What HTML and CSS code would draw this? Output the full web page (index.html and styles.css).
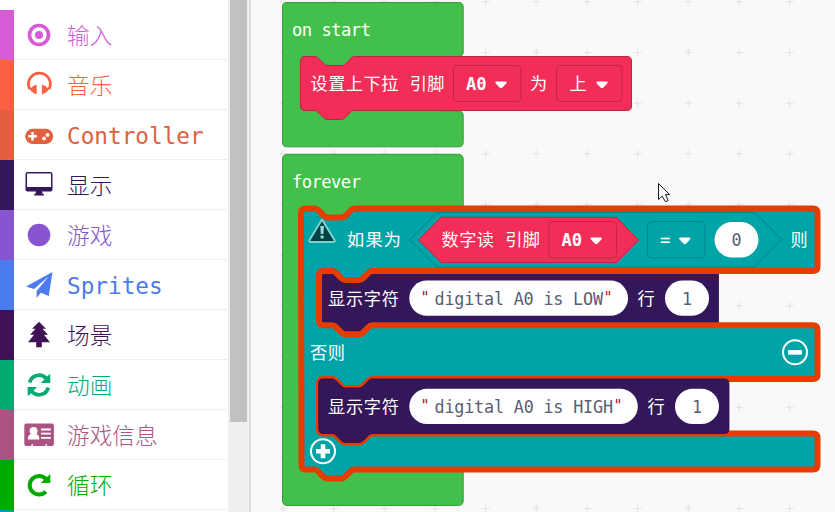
FILE: index.html
```html
<!DOCTYPE html>
<html lang="zh-CN">
<head>
<meta charset="utf-8">
<title>Blocks</title>
<link rel="stylesheet" href="styles.css">
</head>
<body>
<div class="editor">
  <nav class="toolbox">
    <ul class="categories">
      <li class="category input"><svg class="icon" viewBox="0 0 32 32"><circle cx="16" cy="16" r="9.500" fill="none" stroke="currentColor" stroke-width="3.700"/><circle cx="16" cy="16" r="4"/></svg><span>输入</span></li>
      <li class="category music"><svg class="icon" viewBox="0 0 32 32"><path d="M6.500 19.500A10.900 10.900 0 1 1 26.300 19.500" fill="none" stroke="currentColor" stroke-width="2.800"/><path d="M13.700 15.800V25.300L12 24.800 8.500 22.500 7.300 20.800 5 20.300 6 18.500 8 19C9.500 17.500 11 16.200 13.700 15.800zM18.900 15.800V25.300L20.700 24.800 24.200 22.500 25.400 20.800 27.700 20.300 26.700 18.500 24.700 19C23.200 17.500 21.700 16.200 18.900 15.800z"/></svg><span>音乐</span></li>
      <li class="category controller"><svg class="icon" viewBox="0 0 32 32"><rect x="2.200" y="9.700" width="28" height="15.200" rx="7.600"/><path d="M9.500 12.900v8.600M5.200 17.200h8.600" stroke="#fff" stroke-width="2.500"/><circle cx="21" cy="19.400" r="1.900" fill="#fff"/><circle cx="24.500" cy="15.900" r="1.900" fill="#fff"/></svg><span>Controller</span></li>
      <li class="category display"><svg class="icon" viewBox="0 0 32 32"><path fill-rule="evenodd" d="M4.500 3h23q2 0 2 2v15.600q0 2-2 2H19l.7 2.500h1.200v1.500h-9.800v-1.500h1.200l.7-2.500H4.500q-2 0-2-2V5q0-2 2-2zM4 4.500V18h24V4.500z"/></svg><span>显示</span></li>
      <li class="category game"><svg class="icon" viewBox="0 0 32 32"><circle cx="16" cy="16" r="11.300"/></svg><span>游戏</span></li>
      <li class="category sprites"><svg class="icon" viewBox="0 0 32 32"><path d="M29.500 3 25.800 27 17.800 23.800 13.600 29V22L25.500 7.500 11 20 3 17.600z"/></svg><span>Sprites</span></li>
      <li class="category scene"><svg class="icon" viewBox="0 0 32 32"><path d="m16 2.800 7 7h-3.500l5.500 6h-4l6 7.500h-8.200v5h-5.600v-5H5l6-7.500H7l5.500-6H9z"/></svg><span>场景</span></li>
      <li class="category animation"><svg class="icon" viewBox="0 0 32 32"><path d="M6.700 13.500A9.500 9.500 0 0 1 23.500 10M25.300 18.500A9.500 9.500 0 0 1 8.500 22" fill="none" stroke="currentColor" stroke-width="3.700"/><path d="M27.300 5v9h-9.500l3.600-3.600L24.500 7zM4.700 27v-9h9.500l-3.600 3.600L7.500 25z"/></svg><span>动画</span></li>
      <li class="category info"><svg class="icon" viewBox="0 0 32 32"><rect x="1.300" y="4.600" width="29.600" height="22.400" rx="2"/><circle cx="10.600" cy="11.900" r="3.900" fill="#fff"/><path fill="#fff" d="M5 20.500v-1.300q.3-3.700 3.400-4.200h4.600q3 .5 3.300 4.200v1.300zM18 9.600h9.800v1.800H18zm0 4.200h9.800v1.700H18zm0 4.200h9.800v1.800H18zM8.400 25.200h1.600V27H8.400zm14 0H24V27h-1.600z"/></svg><span>游戏信息</span></li>
      <li class="category loops"><svg class="icon" viewBox="0 0 32 32"><path d="M23.300 10.500A9.300 9.300 0 1 0 22.800 22.600" fill="none" stroke="currentColor" stroke-width="4"/><path d="M27.300 5V14H17.800l4-4z"/></svg><span>循环</span></li>
      <li class="category logic"></li>
    </ul>
    <div class="scrollbar"><div class="thumb"></div></div>
  </nav>
  <main class="workspace">
    <svg class="canvas" viewBox="251 0 584 512">
      <defs>
        <pattern id="grid" x="257.500" y="27.200" width="50.670" height="50.670" patternUnits="userSpaceOnUse">
          <path d="M21.500 25.300h8M25.500 21.300v8" stroke="#e2e2e2"/>
        </pattern>
        <path id="arrow" d="M-4.500-3h9q2.200.2.500 2.200L1.400 3Q0 4.400-1.400 3L-5-.8Q-6.700-2.800-4.500-3z"/>
        <path id="branch" d="M301 213q0-4.500 4.500-4.500h9c2.300 0 3.400 1.100 4.500 2.300l4.500 4.500c1.100 1.100 2.300 2.200 4.500 2.200h13.500c2.300 0 3.400-1.100 4.500-2.200l4.500-4.500c1.100-1.200 2.300-2.300 4.500-2.300H813q4.500 0 4.500 4.500v53.500q0 4.500-4.500 4.500H372.500c-2.200 0-3.400 1.100-4.500 2.300l-4.500 4.500c-1.100 1.100-2.200 2.200-4.500 2.200h-13.500c-2.200 0-3.400-1.100-4.500-2.200l-4.500-4.500c-1.100-1.200-2.200-2.300-4.500-2.300H323.500q-4.500 0-4.500 4.500v45.300q0 4.500 4.500 4.500h8.500c2.300 0 3.400 1.100 4.500 2.300l4.500 4.500c1.100 1.100 2.300 2.200 4.500 2.200h13.500c2.300 0 3.400-1.100 4.500-2.200l4.500-4.500c1.100-1.200 2.300-2.300 4.500-2.300H813q4.500 0 4.500 4.500v44.700q0 4.500-4.500 4.500H372.500c-2.200 0-3.400 1.100-4.500 2.300l-4.500 4.500c-1.100 1.100-2.200 2.200-4.500 2.200h-13.500c-2.200 0-3.400-1.100-4.500-2.200l-4.500-4.500c-1.100-1.200-2.200-2.300-4.500-2.300H323.500q-4.500 0-4.500 4.500v45.500q0 4.500 4.500 4.500h8.500c2.300 0 3.400 1.100 4.500 2.300l4.500 4.500c1.100 1.100 2.300 2.200 4.500 2.200h13.500c2.300 0 3.400-1.100 4.500-2.200l4.500-4.500c1.100-1.200 2.300-2.300 4.500-2.300H813q4.500 0 4.500 4.500v27q0 4.500-4.500 4.500H354.500c-2.200 0-3.400 1.100-4.500 2.300l-4.500 4.500c-1.100 1.100-2.200 2.200-4.500 2.200h-13.500c-2.200 0-3.400-1.100-4.500-2.200l-4.500-4.500c-1.100-1.200-2.200-2.300-4.500-2.300h-8q-4.500 0-4.500-4.500z"/>
      </defs>
      <rect x="251" width="584" height="512" fill="url(#grid)"/>

      <!-- on start -->
      <path class="event" d="M287 2.500H458.700q4.500 0 4.500 4.500V52q0 4.500-4.500 4.500H440V111h18.700q4.500 0 4.500 4.500v26.800q0 4.500-4.500 4.500H287q-4.500 0-4.500-4.500V7q0-4.500 4.500-4.500z"/>
      <text class="label" x="292" y="36" textLength="79">on start</text>
      <path class="pin" d="M300.500 61q0-4.500 4.500-4.500h9.500c2.300 0 3.400 1.100 4.500 2.300l4.500 4.500c1.100 1.100 2.300 2.200 4.500 2.200h13.500c2.300 0 3.400-1.100 4.500-2.200l4.500-4.500c1.100-1.200 2.300-2.300 4.500-2.300H627q4.500 0 4.500 4.500v45q0 4.500-4.500 4.500H354.500c-2.200 0-3.400 1.100-4.500 2.300l-4.500 4.500c-1.100 1.100-2.200 2.200-4.500 2.200h-13.500c-2.200 0-3.400-1.100-4.500-2.200l-4.500-4.500c-1.100-1.200-2.200-2.300-4.500-2.300H305q-4.500 0-4.500-4.500z"/>
      <text class="label" x="310.500" y="90" textLength="134">设置上下拉 引脚</text>
      <rect class="pin-field" x="453.500" y="65.500" width="67.500" height="36" rx="4"/>
      <text class="label strong" x="466" y="90" textLength="20.500">A0</text>
      <use class="arrow" href="#arrow" x="501" y="84.500"/>
      <text class="label" x="530" y="90">为</text>
      <rect class="pin-field" x="556.700" y="65.500" width="65.500" height="36" rx="4"/>
      <text class="label" x="569.500" y="90">上</text>
      <use class="arrow" href="#arrow" x="602" y="84.500"/>

      <!-- forever -->
      <rect class="event" x="282.500" y="154.300" width="180.700" height="351.200" rx="4.500"/>
      <text class="label" x="292" y="188" textLength="69">forever</text>

      <!-- if / else -->
      <use class="logic-fill" href="#branch"/>
      <path class="show" d="M319 271h13c2.300 0 3.400 1.100 4.500 2.300l4.500 4.500c1.100 1.100 2.300 2.200 4.500 2.200h13.500c2.300 0 3.400-1.100 4.500-2.200l4.500-4.500c1.100-1.200 2.300-2.300 4.500-2.300h346v54.300h-346l-14 9h-13l-13.500-9h-13z"/>
      <use class="highlight" href="#branch"/>

      <!-- condition -->
      <path class="warning" d="M322 219.500 334.500 240q.8 2-1.300 2h-22.400q-2.100 0-1.300-2z"/>
      <path d="M320.300 226h3.600l-.5 8h-2.600zM320.600 235.500h3v3h-3z" fill="#9fd8da"/>
      <text class="label" x="347" y="246" textLength="54">如果为</text>
      <path class="logic-field" d="M409.700 239.700 437 212.400H754.500L781.800 239.700 754.500 267H437z"/>
      <path class="pin" d="M418.500 239.900 441 217.300H616.500L638.800 239.900 616.500 262.500H441z"/>
      <text class="label" x="441.500" y="246" textLength="98.500">数字读 引脚</text>
      <rect class="pin-field" x="549" y="221.500" width="67.500" height="36.500" rx="4"/>
      <text class="label strong" x="561.500" y="246" textLength="20.500">A0</text>
      <use class="arrow" href="#arrow" x="596.200" y="240.500"/>
      <rect class="logic-field" x="647.500" y="221.500" width="57.500" height="36.500" rx="4"/>
      <text class="label" x="660" y="246">=</text>
      <use class="arrow" href="#arrow" x="684.800" y="240.500"/>
      <rect class="value" x="714.500" y="222" width="44" height="35.500" rx="17.700"/>
      <text class="digit" x="731.500" y="246">0</text>
      <text class="label" x="790.500" y="246">则</text>

      <!-- first statement -->
      <text class="label" x="328" y="305" textLength="71">显示字符</text>
      <rect class="value" x="409.300" y="280.500" width="218.700" height="35.300" rx="17.600"/>
      <text class="quote" x="420.500" y="303">"</text>
      <text class="digit" x="434.500" y="305" textLength="168.500">digital A0 is LOW</text>
      <text class="quote" x="603.500" y="303">"</text>
      <text class="label" x="637.500" y="305">行</text>
      <rect class="value" x="665" y="280.500" width="44" height="35.300" rx="17.600"/>
      <text class="digit" x="682" y="305">1</text>

      <text class="label" x="310" y="359" textLength="35">否则</text>
      <circle class="button" cx="795" cy="352.200" r="12"/>
      <path d="M788 352.400h14" stroke="#fff" stroke-width="4.600"/>

      <!-- second statement -->
      <path class="show" d="M318.700 383.400q0-4.500 4.500-4.500h8.800c2.300 0 3.400 1.100 4.500 2.300l4.500 4.500c1.100 1.100 2.300 2.200 4.500 2.200h13.500c2.300 0 3.400-1.100 4.500-2.200l4.500-4.500c1.100-1.200 2.300-2.300 4.500-2.300h352q4.500 0 4.500 4.500V429q0 4.500-4.500 4.500H372.500c-2.200 0-3.400 1.100-4.500 2.300l-4.500 4.500c-1.100 1.100-2.200 2.200-4.500 2.200h-13.500c-2.200 0-3.400-1.100-4.500-2.200l-4.500-4.500c-1.100-1.200-2.200-2.300-4.500-2.300h-8.800q-4.500 0-4.500-4.500z"/>
      <text class="label" x="328" y="413" textLength="71">显示字符</text>
      <rect class="value" x="409.300" y="388.800" width="228.500" height="35.200" rx="17.600"/>
      <text class="quote" x="420.500" y="411">"</text>
      <text class="digit" x="434.500" y="413" textLength="178.500">digital A0 is HIGH</text>
      <text class="quote" x="613.500" y="411">"</text>
      <text class="label" x="647.500" y="413">行</text>
      <rect class="value" x="675" y="388.800" width="44" height="35.200" rx="17.600"/>
      <text class="digit" x="692" y="413">1</text>

      <circle class="button" cx="323" cy="451.300" r="12"/>
      <path d="M316 451.300h14M323 444.300v14" stroke="#fff" stroke-width="4.600"/>

      <path d="M658.500 183.500v16l3.700-3.400 3.200 5.600 2.700-1.200-2.600-5.900h4.200z" fill="#fff" stroke="#16162a" stroke-width="1"/>
    </svg>
  </main>
</div>
</body>
</html>
```
FILE: styles.css
```css
* { box-sizing: border-box; }
body { margin: 0; background: #f9f9f9; font-family: "DejaVu Sans Mono", "Noto Sans CJK SC", monospace; }
.editor { display: flex; width: 835px; height: 512px; overflow: hidden; }
.toolbox { display: flex; flex: 0 0 251px; background: #efefef; border-right: 2px solid #dcdcdc; overflow: hidden; }
.categories { flex: 0 0 228px; margin: 0; padding: 10px 0 0; list-style: none; background: #fff; }
.category { display: flex; align-items: center; height: 50px; padding-left: 9px; border-left: 14px solid; font-size: 22.700px; font-weight: 300; background: linear-gradient(#eceff0, #eceff0) left bottom / 100% 1px no-repeat; }
.category span { margin-left: 12px; padding-top: 2px; line-height: 30px; }
.icon { width: 32px; height: 32px; margin-top: -1px; fill: currentColor; }
.input { color: #d65cd6; }
.music { color: #f95f41; }
.controller { color: #e06040; }
.display { color: #33175a; }
.game { color: #8854d0; }
.sprites { color: #4b7bec; }
.scene { color: #401255; }
.animation { color: #03aa74; }
.info { color: #ab5484; }
.loops { color: #00aa00; }
.logic { color: #00a4a6; }
.scrollbar { flex: 1; padding-left: 2px; }
.thumb { width: 17px; height: 422px; background: #c1c1c1; }
.workspace { flex: 1; background: #f9f9f9; }
.canvas { display: block; width: 584px; height: 512px; }
.event { fill: #42c04b; stroke: #359a3c; }
.pin { fill: #f22e58; stroke: #b72848; }
.pin-field { fill: #f22e58; stroke: #c12546; }
.logic-fill { fill: #00a4a6; }
.logic-field { fill: #00a4a6; stroke: #008385; }
.highlight { fill: none; stroke: #e63c00; stroke-width: 6; stroke-linejoin: round; }
.show { fill: #33175a; stroke: #29124a; stroke-width: .8; }
.label { fill: #fff; font-size: 17.200px; }
.strong { font-weight: 700; }
.arrow { fill: #fff; }
.value { fill: #fff; }
.digit { fill: #575e75; font-size: 16.800px; }
.quote { fill: #a31515; font-size: 15px; }
.warning { fill: #004344; stroke: #83cfd0; stroke-width: 2; stroke-linejoin: round; }
.button { fill: none; stroke: #fff; stroke-width: 2; }
```
